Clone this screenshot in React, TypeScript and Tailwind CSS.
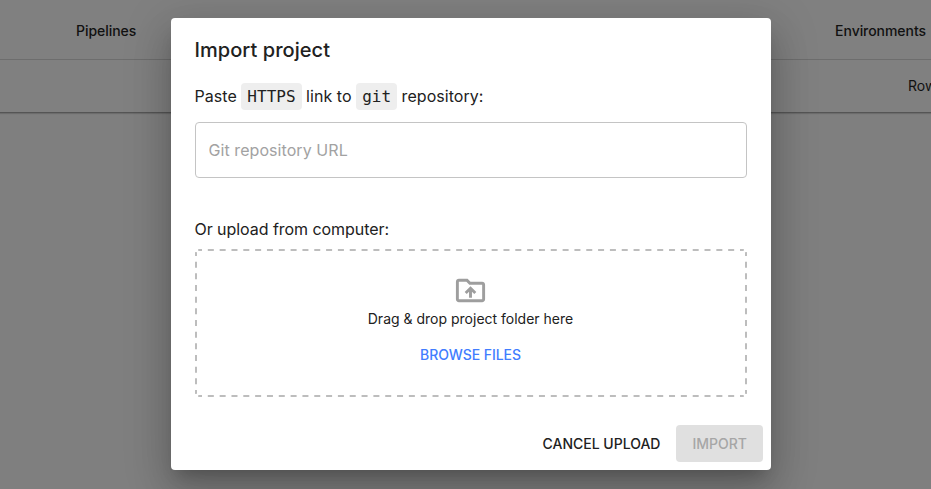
import { MdOutlineDriveFolderUpload } from "react-icons/md";

function Code({ children }: { children: string }) {
  return (
    <code className="rounded-[4px] bg-[#eeeeee] px-[6px] py-[4px] font-['DejaVu_Sans_Mono',monospace] text-[16px] tracking-normal">
      {children}
    </code>
  );
}

function DashedFrame() {
  return (
    <svg className="absolute inset-0 size-full" fill="none" stroke="#bdbdbd" strokeWidth="2">
      <path d="M4 1H548M4 147H548" strokeDasharray="6 5.826" strokeDashoffset="3" />
      <path d="M1 4V144M551 4V144" strokeDasharray="6 5.667" strokeDashoffset="3" />
      <path d="M3.2 1.1L4 1M1.1 3.2L1 4M548.8 1.1L548 1M550.9 3.2L551 4M3.2 146.9L4 147M1.1 144.8L1 144M548.8 146.9L548 147M550.9 144.8L551 144" />
    </svg>
  );
}

export default function App() {
  return (
    <div className="relative h-[489px] w-[931px] overflow-hidden bg-[#7f7f7f] font-['Inter',sans-serif] text-[#111111]">
      <div className="flex h-[60px] items-center border-b border-[#6d6d6d] bg-[#808080] pt-[2px] pl-[76px] text-[14px] font-medium">
        <span className="-tracking-[0.05px]">Pipelines</span>
        <span className="ml-auto pr-[5px] -tracking-[0.05px]">Environments</span>
      </div>
      <div className="flex h-[53px] items-center justify-end border-b border-[#555555] bg-[#808080] text-[14px] shadow-[0_1px_1px_rgba(0,0,0,0.15)]">
        <span className="-mt-[2px] -mr-[38px] w-[61px] whitespace-nowrap">Rows per</span>
      </div>
      <div className="absolute top-[18px] left-[171px] flex h-[452px] w-[600px] flex-col rounded-[4px] bg-white px-6 text-[#212121] shadow-[0_11px_15px_-7px_rgba(0,0,0,0.2),0_24px_38px_3px_rgba(0,0,0,0.14),0_9px_46px_8px_rgba(0,0,0,0.12)]">
        <h2 className="mt-4 -ml-[0.5px] h-8 text-[20px] leading-8 font-medium tracking-[0.05px]">Import project</h2>
        <p className="mt-[18px] -ml-[0.5px] h-6 text-[16px] leading-6 tracking-[0.05px]">
          Paste <Code>HTTPS</Code> link to <Code>git</Code> repository:
        </p>
        <input className="mt-[14px] h-14 shrink-0 rounded-[4px] border border-[#c4c4c4] px-[12.5px] text-[16px] tracking-[0.07px] placeholder:text-[#a2a2a2]" placeholder="Git repository URL" />
        <p className="mt-[39px] -ml-[0.5px] h-6 text-[16px] leading-6 -tracking-[0.05px]">Or upload from computer:</p>
        <div className="relative mt-2 flex h-[148px] shrink-0 flex-col items-center pt-[24px]">
          <DashedFrame />
          <MdOutlineDriveFolderUpload className="mr-px size-[35px] text-[#9e9e9e]" />
          <span className="mt-px mr-px text-[14px] leading-5">Drag &amp; drop project folder here</span>
          <button className="mt-4 mr-px text-[14px] leading-5 font-medium -tracking-[0.05px] text-[#417dff]">BROWSE FILES</button>
        </div>
        <div className="mt-7 -mr-4 flex h-[37px] items-center justify-end gap-4 text-[14px] font-medium">
          <button>CANCEL UPLOAD</button>
          <button className="h-[37px] rounded-[4px] bg-[#e0e0e0] px-4 text-[#a6a6a6]">IMPORT</button>
        </div>
      </div>
    </div>
  );
}
